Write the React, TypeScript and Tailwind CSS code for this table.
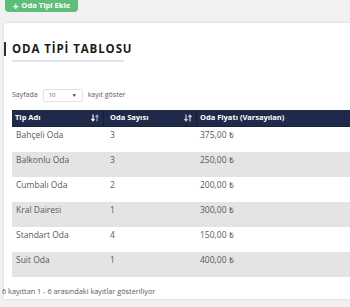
import React from 'react';

interface RoomType {
  name: string;
  count: number;
  price: string;
}

const rows: RoomType[] = [
  { name: 'Bahçeli Oda', count: 3, price: '375,00 ₺' },
  { name: 'Balkonlu Oda', count: 3, price: '250,00 ₺' },
  { name: 'Cumbalı Oda', count: 2, price: '200,00 ₺' },
  { name: 'Kral Dairesi', count: 1, price: '300,00 ₺' },
  { name: 'Standart Oda', count: 4, price: '150,00 ₺' },
  { name: 'Suit Oda', count: 1, price: '400,00 ₺' },
];

function SortIcon({ active }: { active?: boolean }) {
  return (
    <svg width="8" height="8" viewBox="0 0 8 8" className="shrink-0">
      <path d="M2 0.5v6M0.5 5l1.5 1.8L3.5 5" stroke={active ? '#ffffff' : '#c9cfdc'} strokeWidth="1.2" fill="none" />
      <path d="M6 7.5v-6M4.5 3L6 1.2 7.5 3" stroke={active ? '#9aa3b8' : '#c9cfdc'} strokeWidth="1.2" fill="none" />
    </svg>
  );
}

export default function App() {
  return (
    <div className="w-[350px] h-[307px] overflow-hidden bg-[#f1f1f1] font-['Open_Sans',sans-serif] text-[#5a5a5a]">
      <div className="pl-[5px] h-[29px]">
        <button className="mt-[-6px] h-[18px] w-[73px] rounded-[4px] bg-[#5fbd7c] text-white text-[7.6px] font-bold flex items-center justify-center gap-[3px] pt-[5px]">
          <span className="text-[10px] leading-none">+</span>
          <span>Oda Tipi Ekle</span>
        </button>
      </div>

      <div className="ml-[4px] bg-white rounded-tl-[3px] shadow-[0_0_3px_rgba(0,0,0,0.12)] h-[276px] pt-[18px]">
        <div className="flex">
          <div className="w-[2px] h-[14px] bg-[#2a2f3d] mt-[1px]" />
          <div className="ml-[6px]">
            <h2 className="text-[11.5px] font-bold tracking-[0.9px] text-[#1b1b1b] leading-[16px]">ODA TİPİ TABLOSU</h2>
            <div className="mt-[3px] h-[2px] w-[112px] bg-[#e1e4ea]" />
          </div>
        </div>

        <div className="mt-[27px] ml-[8px] flex items-center gap-[5px] text-[7px]">
          <span>Sayfada</span>
          <div className="w-[40px] h-[13px] border border-[#e2e2e2] rounded-[2px] flex items-center justify-between px-[5px] text-[6px]">
            <span>10</span>
            <span className="text-[5px] text-[#333]">▼</span>
          </div>
          <span>kayıt göster</span>
        </div>

        <div className="mt-[8px] ml-[8px] text-[8.5px]">
          <div className="flex h-[17px] bg-[#1f2a4a] text-white font-bold text-[7.5px] items-center border-b border-[#16203b]">
            <div className="w-[92px] h-full flex items-center justify-between pl-[3px] pr-[4px] border-r border-[#141c33]">
              <span>Tip Adı</span>
              <SortIcon active />
            </div>
            <div className="w-[93px] h-full flex items-center justify-between pl-[6px] pr-[4px] border-r border-[#141c33]">
              <span>Oda Sayısı</span>
              <SortIcon />
            </div>
            <div className="flex-1 h-full flex items-center pl-[3px]">
              <span>Oda Fiyatı (Varsayılan)</span>
            </div>
          </div>
          {rows.map((r, i) => (
            <div key={r.name} className={`flex h-[25px] pt-[2px] ${i % 2 === 1 ? 'bg-[#e4e4e4]' : 'bg-white'}`}>
              <div className="w-[92px] pl-[4px]">{r.name}</div>
              <div className="w-[93px] pl-[6px]">{r.count}</div>
              <div className="flex-1 pl-[3px]">{r.price}</div>
            </div>
          ))}
          <div className="mt-[9px] ml-[-10px] text-[7.3px]">6 kayıttan 1 - 6 arasındaki kayıtlar gösteriliyor</div>
        </div>
      </div>
    </div>
  );
}
